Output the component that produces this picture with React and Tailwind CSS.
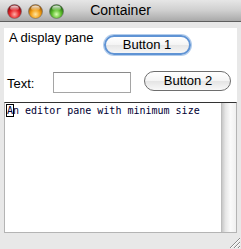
import React from "react";

function Light({ id, c1, c2, c3 }) {
  return (
    <svg width="15" height="15" viewBox="0 0 15 15">
      <defs>
        <radialGradient id={id} cx="50%" cy="70%" r="60%">
          <stop offset="0%" stopColor={c1} />
          <stop offset="55%" stopColor={c2} />
          <stop offset="100%" stopColor={c3} />
        </radialGradient>
        <linearGradient id={id + "h"} x1="0" y1="0" x2="0" y2="1">
          <stop offset="0%" stopColor="#fff" stopOpacity="0.9" />
          <stop offset="100%" stopColor="#fff" stopOpacity="0" />
        </linearGradient>
      </defs>
      <circle cx="7.5" cy="7.5" r="7" fill={`url(#${id})`} stroke="#6b6b6b" strokeWidth="0.6" />
      <ellipse cx="7.5" cy="4.2" rx="4.3" ry="2.8" fill={`url(#${id}h)`} />
    </svg>
  );
}

function AquaButton({ children, focused }) {
  return (
    <div
      className={
        "flex items-center justify-center rounded-full w-[87px] h-[20px] text-[13px] text-black " +
        (focused
          ? "border-2 border-[#5f93d4] shadow-[0_0_0_1px_#b3cdec] bg-[linear-gradient(#ffffff,#f4f4f4_50%,#e6e6e6_51%,#f6f6f6)]"
          : "border border-[#6e6e6e] bg-[linear-gradient(#ffffff,#f4f4f4_50%,#e4e4e4_51%,#f8f8f8)]")
      }
    >
      {children}
    </div>
  );
}

export default function App() {
  return (
    <div
      className="w-[241px] h-[249px] bg-[#e8e8e8] flex flex-col relative overflow-hidden"
      style={{ fontFamily: '"Liberation Sans", "DejaVu Sans", sans-serif' }}
    >
      <div className="h-[22px] shrink-0 flex items-center border-b border-[#5e5e5e] bg-[linear-gradient(#e6e6e6,#cfcfcf_50%,#a9a9a9)] relative">
        <div className="flex items-center gap-[6px] pl-[7px] pt-[1px]">
          <Light id="r" c1="#ffb0a8" c2="#e8262a" c3="#8a0a10" />
          <Light id="o" c1="#ffe6a0" c2="#f5a015" c3="#a05a00" />
          <Light id="g" c1="#d8ffb0" c2="#5cbd2c" c3="#236b10" />
        </div>
        <div className="absolute inset-0 flex items-center justify-center text-[14px] text-black">
          Container
        </div>
      </div>

      <div className="mx-[4px] mt-[6px] bg-white h-[74px] flex flex-col">
        <div className="flex items-start h-[30px]">
          <span className="ml-[5px] mt-[2px] text-[13px] leading-[16px] text-black">A display pane</span>
          <div className="ml-[10px] mt-[7px]">
            <AquaButton focused>Button 1</AquaButton>
          </div>
        </div>
        <div className="flex items-start mt-[13px]">
          <span className="ml-[3px] mt-[5px] text-[13px] leading-[16px] text-black">Text:</span>
          <div className="ml-[19px] mt-[1px] w-[78px] h-[21px] bg-white border border-[#a5a5a5] border-t-[#8a8a8a]" />
          <div className="ml-[13px]">
            <AquaButton>Button 2</AquaButton>
          </div>
        </div>
      </div>

      <div className="mx-[4px] h-[131px] flex bg-white border border-[#b4b4b4] border-t-[#333333]">
        <div className="flex-1 pl-[2px] pt-[1px]">
          <div
            className="text-[10px] leading-[13px] text-[#000033] whitespace-nowrap"
            style={{ fontFamily: '"DejaVu Sans Mono", "Liberation Mono", monospace' }}
          >
            <span className="outline outline-1 outline-black">A</span>n editor pane with minimum size
          </div>
        </div>
        <div className="w-[15px] bg-[linear-gradient(90deg,#c8c8c8,#e6e6e6_25%,#fafafa_60%,#f0f0f0)] border-l border-[#bdbdbd]" />
      </div>

      <svg className="absolute right-[1px] bottom-[1px]" width="11" height="11" viewBox="0 0 11 11">
        <path d="M1 11 L11 1 M5 11 L11 5 M9 11 L11 9" stroke="#8a8a8a" strokeWidth="1" />
        <path d="M2 11 L11 2 M6 11 L11 6 M10 11 L11 10" stroke="#ffffff" strokeWidth="1" />
      </svg>
    </div>
  );
}
